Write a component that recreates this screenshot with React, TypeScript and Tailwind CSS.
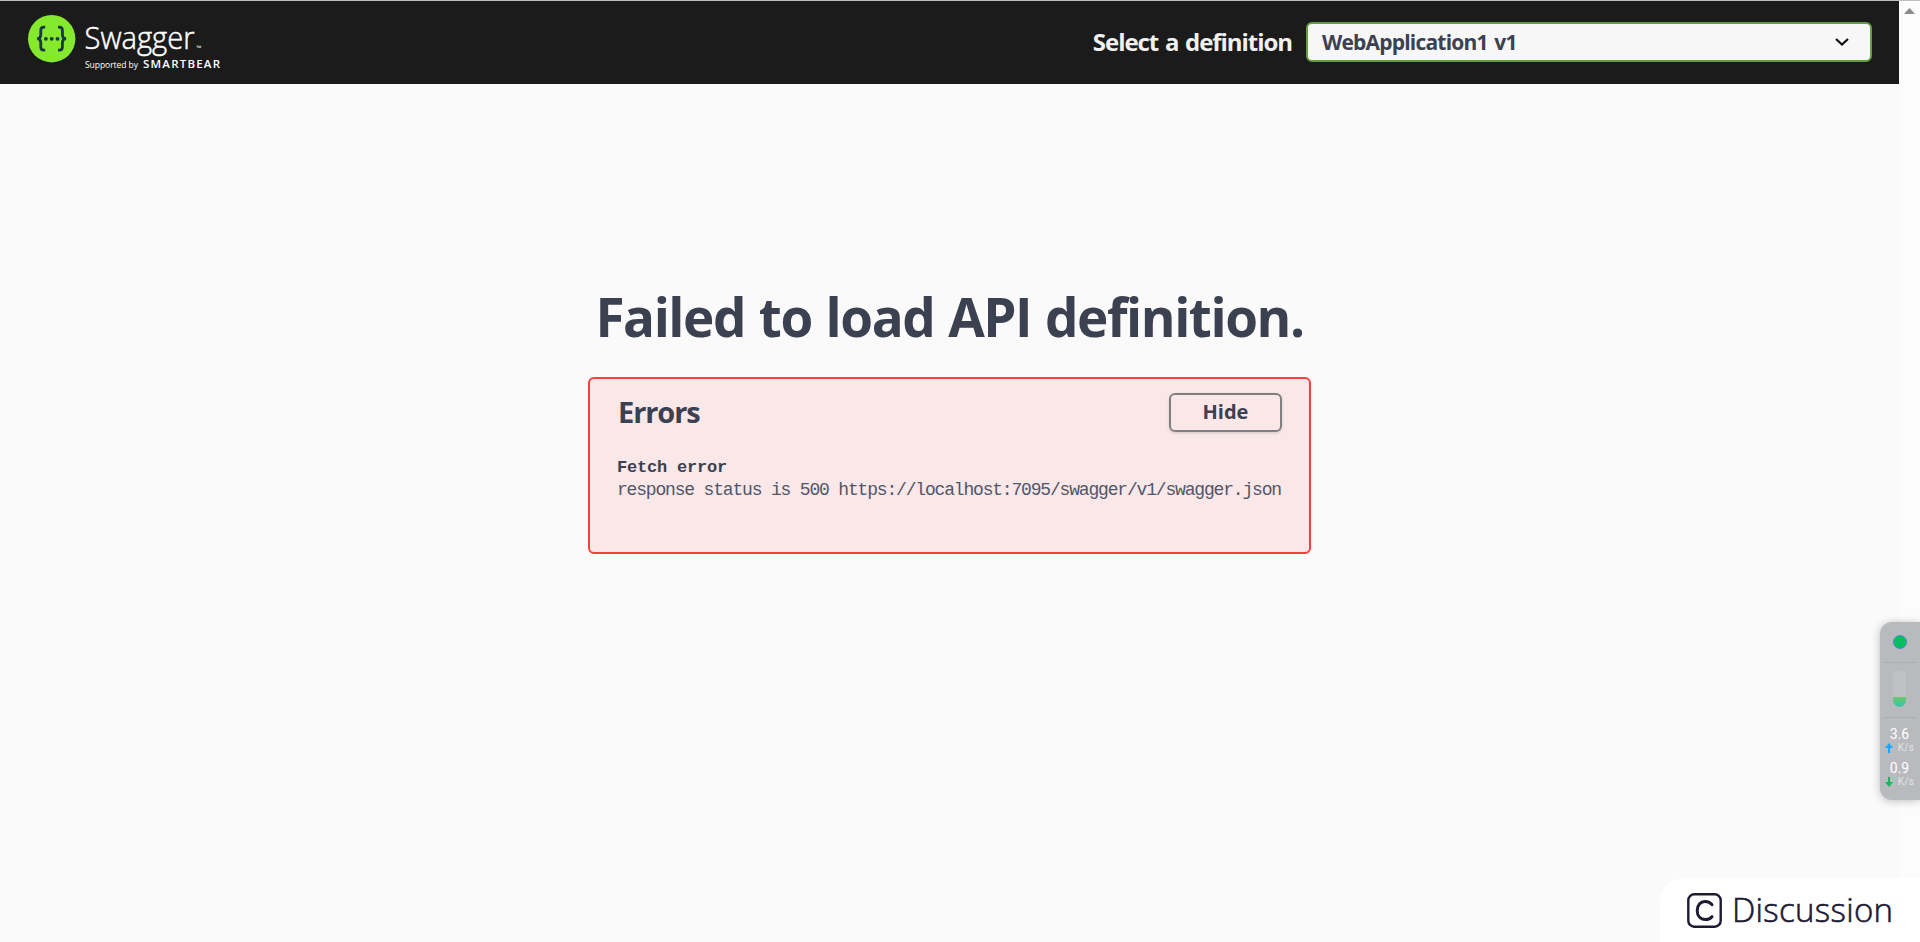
// Swagger UI landing page shown when the API definition fails to load
function SwaggerLogo() {
  return (
    <svg width="200" height="60" viewBox="0 0 200 60" fill="none">
      <circle cx="23.7" cy="26.7" r="23.7" fill="#85ea2d" />
      <g stroke="#173647" strokeWidth="2.8" fill="none">
        <path d="M17.2 15.2h-1.4c-2.2 0-3 1.1-3 3.1v4.2c0 2.6-1.2 4-3.6 4.2 2.4.2 3.6 1.6 3.6 4.2v4.2c0 2 .8 3.1 3 3.1h1.4" />
        <path d="M30 15.2h1.4c2.2 0 3 1.1 3 3.1v4.2c0 2.6 1.2 4 3.6 4.2-2.4.2-3.6 1.6-3.6 4.2v4.2c0 2-.8 3.1-3 3.1H30" />
      </g>
      <g fill="#173647">
        <circle cx="17.9" cy="26.8" r="1.9" />
        <circle cx="23.7" cy="26.8" r="1.9" />
        <circle cx="29.5" cy="26.8" r="1.9" />
      </g>
      <g fill="#fff">
        <text x="56.5" y="36.5" fontSize="31" fontWeight="300" stroke="#fff" strokeWidth="0.5" textLength="110" lengthAdjust="spacingAndGlyphs" className="font-['Open_Sans',sans-serif]">Swagger</text>
        <text x="168.5" y="38" fontSize="6" textLength="5" lengthAdjust="spacingAndGlyphs" className="font-['Open_Sans',sans-serif]">™</text>
        <text x="57" y="55.5" fontSize="8.5" textLength="53" className="font-['Open_Sans',sans-serif]">Supported by</text>
        <text x="115" y="55.5" fontSize="11.5" fontWeight="600" textLength="77" className="font-['Open_Sans',sans-serif]">SMARTBEAR</text>
      </g>
    </svg>
  );
}

function Speed({ value, up }: { value: string; up: boolean }) {
  return (
    <div className="h-[34px] w-[37px] text-center text-white">
      <div className="h-[15px] font-['Roboto',sans-serif] text-[14px] leading-[15px]">{value}</div>
      <div className="flex h-3 items-center justify-center gap-[5px] font-['Roboto',sans-serif] text-[10px] leading-3 tracking-[0.3px] text-[#e4e4e7]">
        <svg width="8" height="10" viewBox="0 0 8 10" className={up ? "" : "rotate-180"}>
          <path d="M4 0 8 5H5v5H3V5H0z" fill={up ? "#18a8ff" : "#08ba62"} />
        </svg>
        K/s
      </div>
    </div>
  );
}

export default function App() {
  return (
    <div className="relative flex h-[942px] w-[1920px] flex-col overflow-hidden bg-[#fafafa] font-['Open_Sans',sans-serif] text-[#3b4151]">
      <div className="h-px shrink-0 bg-[#bdc0c0]" />

      <div className="flex min-h-0 flex-1">
        <div className="w-[1899px]">
          {/* ── Topbar ── */}
          <header className="flex h-[83px] items-start justify-between bg-[#1b1b1b] pr-[27px] pl-7">
            <div className="pt-[11px]">
              <SwaggerLogo />
            </div>
            <div className="flex pt-[21px]">
              <span className="mr-[14px] text-2xl leading-10 font-bold tracking-[-1.05px] [word-spacing:1.5px] whitespace-nowrap text-[#f0f0f0]">
                Select a definition
              </span>
              <div className="flex h-10 w-[566px] items-center justify-between rounded-md border-2 border-[#62a03f] bg-[#f7f7f7] pr-5 pl-[14px]">
                <span className="-mt-px text-[21px] leading-9 font-bold tracking-[-0.8px] [word-spacing:2px]">WebApplication1 v1</span>
                <svg width="16" height="10" viewBox="0 0 16 10" fill="none">
                  <path d="M2 2l6 5.6L14 2" stroke="#111" strokeWidth="2.2" />
                </svg>
              </div>
            </div>
          </header>

          {/* ── Failure message ── */}
          <main className="flex flex-col items-center pt-[197px]">
            <h1 className="text-[53px] leading-[72px] font-bold tracking-[-1.45px] [word-spacing:1.5px] whitespace-nowrap">
              Failed to load API definition.
            </h1>
            <section className="mt-6 h-[177px] w-[723px] rounded-md border-2 border-[#f93e3e] bg-[#fae7e7] pr-[27px] pl-7 pt-[13px]">
              <div className="flex items-center justify-between">
                <h2 className="text-[29px] leading-10 font-bold tracking-[-1.1px]">Errors</h2>
                <button className="h-[39px] w-[113px] rounded-md border-2 border-[#808080] pb-0.5 text-[20px] leading-[33px] font-bold shadow-[0_1px_3px_rgba(0,0,0,0.15)]">
                  Hide
                </button>
              </div>
              <div className="-ml-px mt-6 font-['Liberation_Mono',monospace] text-lg leading-[23px] whitespace-nowrap">
                <h4 className="text-[17px] font-bold tracking-[-0.2px]">Fetch error</h4>
                <p className="tracking-[-1.18px] text-[#51566a]">response status is 500 https://localhost:7095/swagger/v1/swagger.json</p>
              </div>
            </section>
          </main>
        </div>

        {/* ── Scrollbar ── */}
        <div className="flex flex-1 justify-center bg-[#fcfcfc] pt-[7px]">
          <svg width="11" height="6" viewBox="0 0 11 6">
            <path d="M5.5 0 11 6H0z" fill="#8b8b8b" />
          </svg>
        </div>
      </div>

      {/* ── Network monitor ── */}
      <aside className="absolute top-[622px] right-0 flex h-[178px] w-10 flex-col items-center rounded-l-xl bg-[#b8babe] pr-px shadow-[0_1px_8px_rgba(0,0,0,0.25)]">
        <div className="mt-[13px] size-[14px] rounded-full border border-[#4b8fc4] bg-[#08bd62]" />
        <div className="mt-[13px] h-px w-[33px] bg-[#a5afb4]" />
        <div className="mt-[7px] flex h-[37px] w-[13px] flex-col justify-end overflow-hidden rounded-full bg-[#c0c1c4]">
          <div className="h-[10px] bg-linear-to-b from-[#68cb68] to-[#35c4aa]" />
        </div>
        <div className="mt-[10px] mb-[9px] h-px w-[33px] bg-[#a5afb4]" />
        <Speed value="3.6" up />
        <Speed value="0.9" up={false} />
      </aside>

      {/* ── Discussion button ── */}
      <div className="absolute right-0 bottom-0 flex h-16 w-[260px] items-center rounded-tl-3xl bg-white pl-[27px] text-[#1c1b33]">
        <svg width="35" height="35" viewBox="0 0 35 35" fill="none" stroke="currentColor">
          <rect x="1.3" y="1.3" width="32.4" height="32.4" rx="6" strokeWidth="2.4" />
          <path d="M25 11.7c-1.5-2-3.9-3.2-6.6-3.2-5 0-8.2 3.7-8.2 9s3.2 9 8.2 9c2.7 0 5.1-1 6.6-2.8" strokeWidth="3" strokeLinecap="round" />
        </svg>
        <span className="ml-[10px] font-['Open_Sans',sans-serif] text-[33px] leading-10 font-light tracking-[0.3px] [-webkit-text-stroke:0.6px_#1c1b33]">Discussion</span>
      </div>
    </div>
  );
}
